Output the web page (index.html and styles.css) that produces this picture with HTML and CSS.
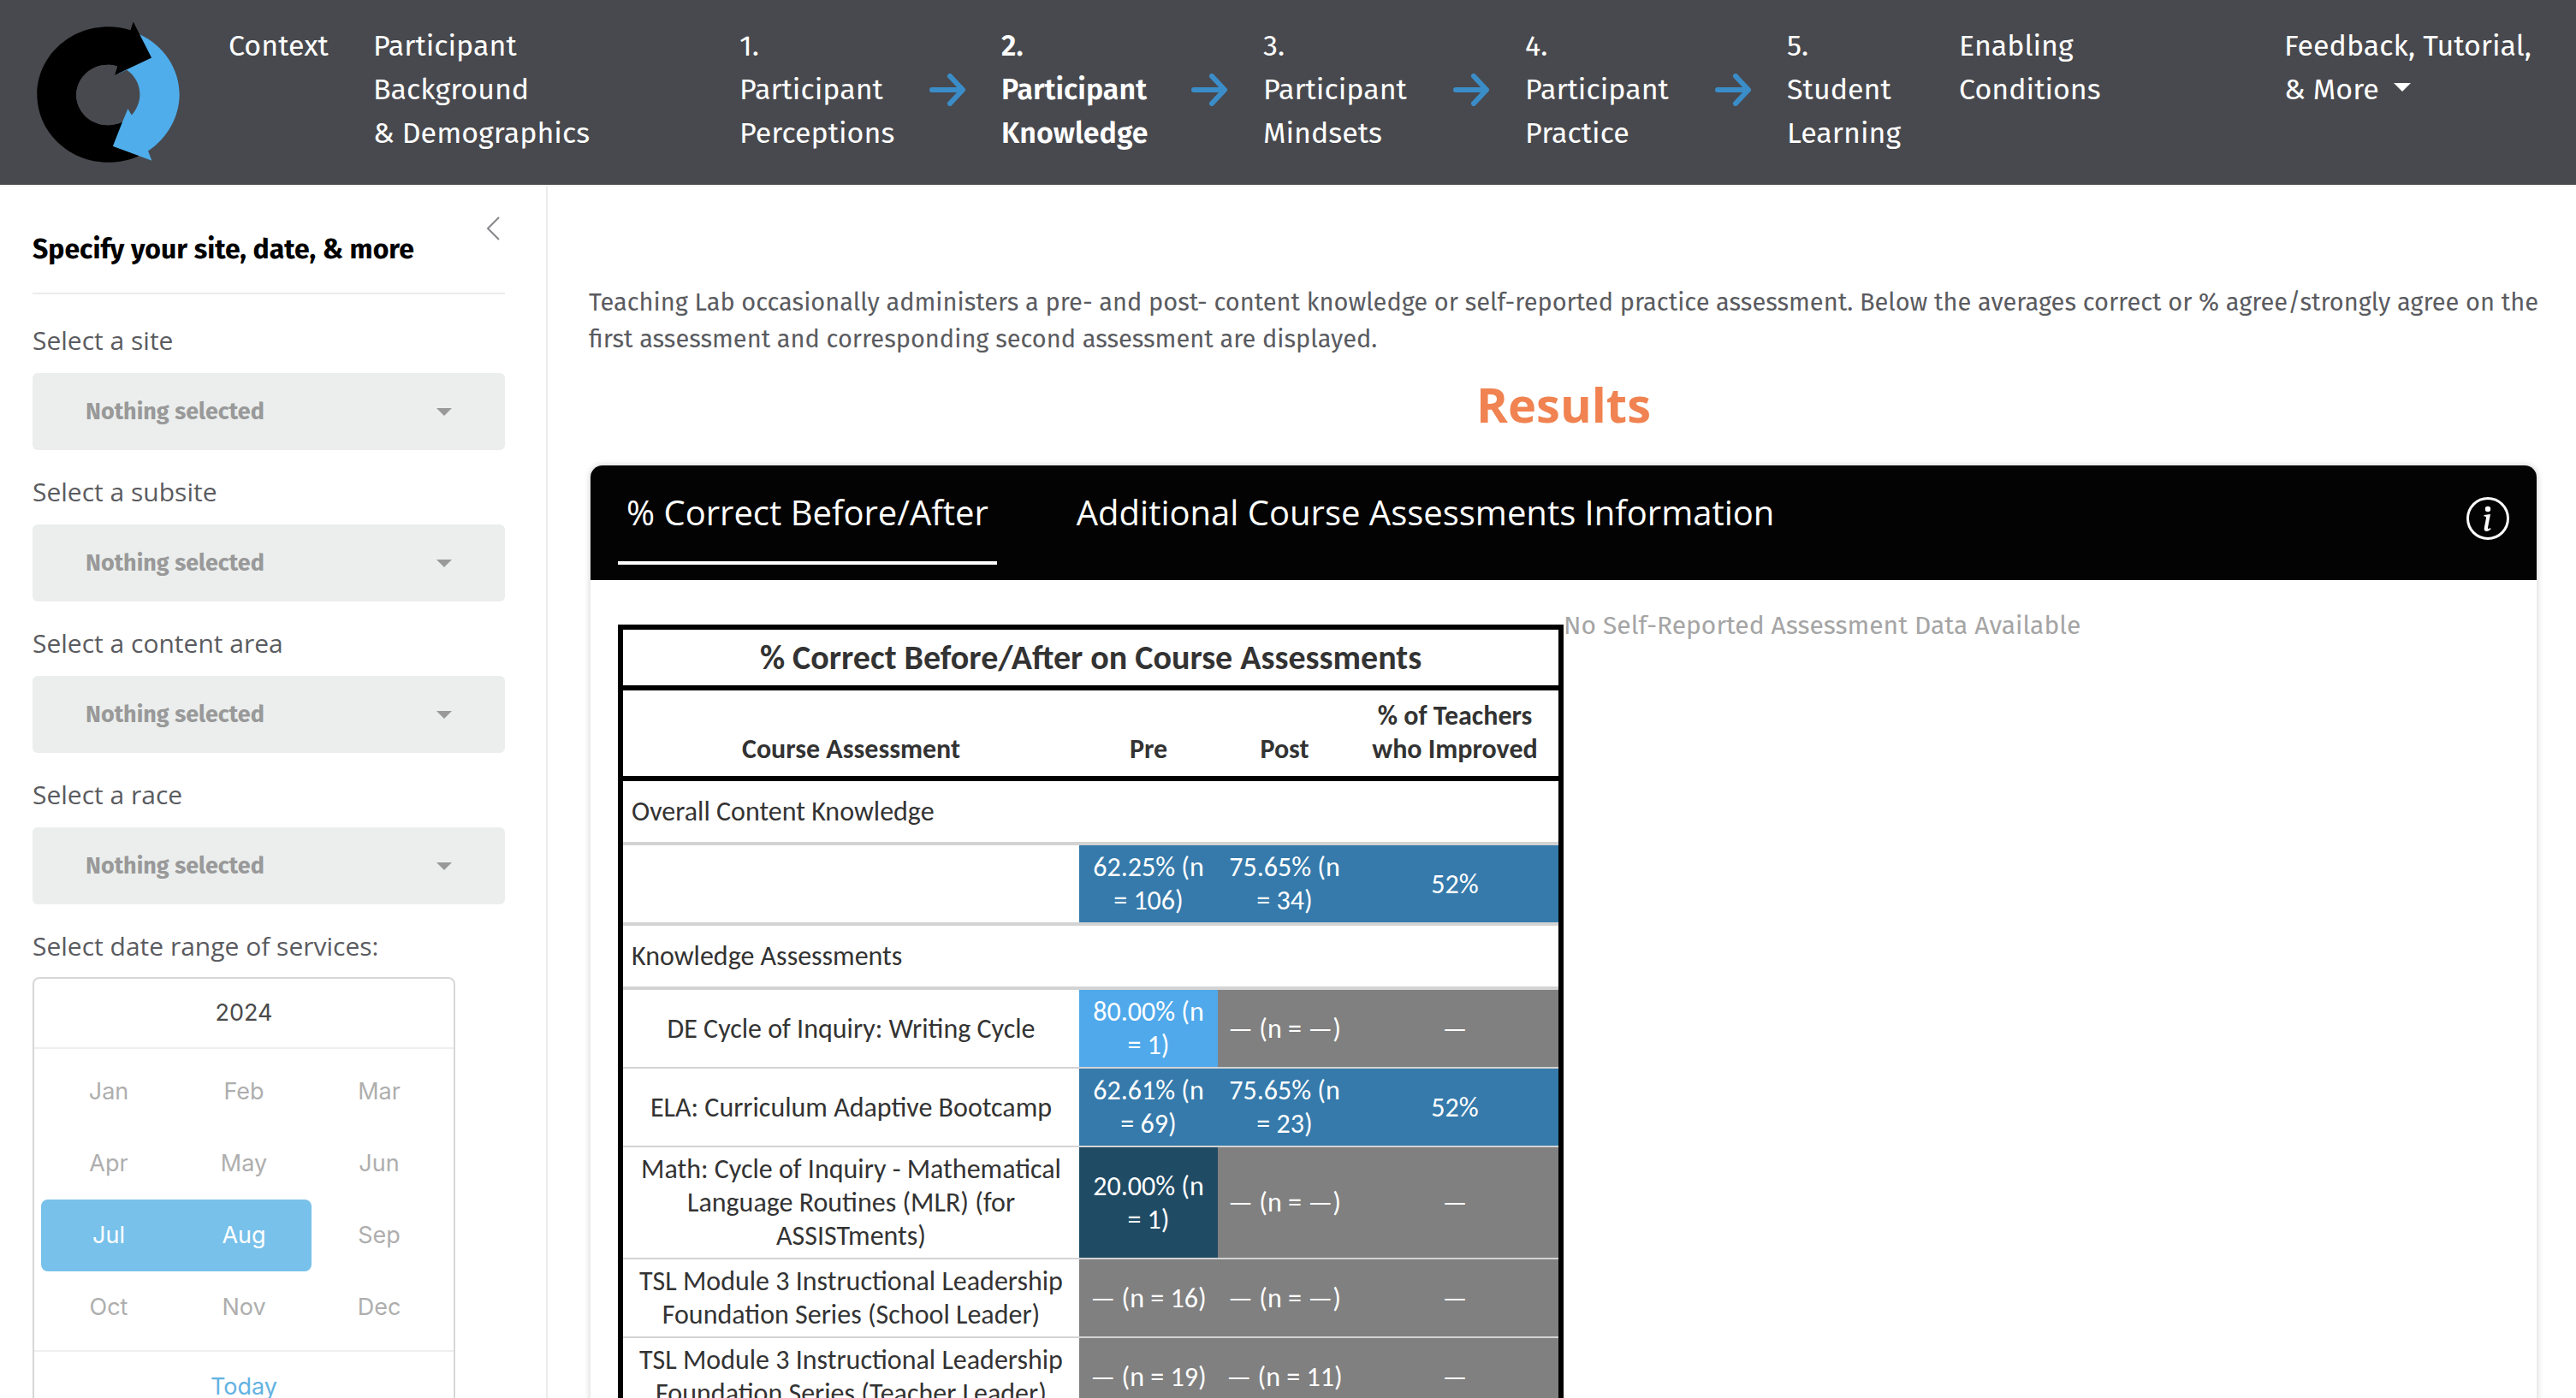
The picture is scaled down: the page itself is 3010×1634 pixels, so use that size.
FILE: index.html
```html
<!DOCTYPE html>
<html lang="en">
<head>
<meta charset="utf-8">
<title>Participant Knowledge</title>
<link rel="stylesheet" href="styles.css">
</head>
<body>
<svg class="sprite" aria-hidden="true">
  <symbol id="arrow" viewBox="0 0 42 38"><path d="M3 19H37M24 3L39 19L24 35" fill="none" stroke="#3b8dc8" stroke-width="6" stroke-linecap="round" stroke-linejoin="round"/></symbol>
  <symbol id="caret" viewBox="0 0 20 10"><path d="M0 0H20L10 10Z" fill="currentColor"/></symbol>
</svg>

<header class="navbar">
  <a class="logo" href="#" aria-label="Home">
    <svg viewBox="66 42 508 504">
      <path fill="#4fadeb" d="M431 90C515 130 570 210 570 301C570 380 528 455 460 500L473 534L336 483L370 300L345 170Z"/>
      <path fill="#000" fill-rule="evenodd" d="M320 540C182 540 70 433 70 301C70 170 182 63 320 63C348 63 374 67 398 75L408 46L472 172L342 234L352 202A111 106 0 1 0 370 397L336 483L428 517C396 531 360 540 320 540Z"/>
      <path fill="#48494e" d="M352 202L342 234L385 215C415 236 431 268 431 301C431 328 420 354 402 374L389 352L370 397A111 106 0 1 1 352 202Z"/>
    </svg>
  </a>
  <nav class="menu">
    <a href="#">Context</a>
    <a href="#">Participant<br>Background<br>&amp; Demographics</a>
    <div class="steps">
      <a class="step" href="#"><span>1.<br>Participant<br>Perceptions</span><svg class="arrow"><use href="#arrow"/></svg></a>
      <a class="step active" href="#"><span>2.<br>Participant<br>Knowledge</span><svg class="arrow"><use href="#arrow"/></svg></a>
      <a class="step" href="#"><span>3.<br>Participant<br>Mindsets</span><svg class="arrow"><use href="#arrow"/></svg></a>
      <a class="step" href="#"><span>4.<br>Participant<br>Practice</span><svg class="arrow"><use href="#arrow"/></svg></a>
      <a href="#">5.<br>Student<br>Learning</a>
    </div>
    <a href="#">Enabling<br>Conditions</a>
    <a class="more" href="#">Feedback, Tutorial,<br>&amp; More <svg class="caret"><use href="#caret"/></svg></a>
  </nav>
</header>

<div class="layout">
  <aside class="sidebar">
    <button class="collapse" type="button" aria-label="Collapse sidebar"><svg viewBox="0 0 16 28"><path d="M15 1L2 14L15 27" fill="none" stroke="#85868a" stroke-width="2"/></svg></button>
    <h2>Specify your site, date, &amp; more</h2>
    <div class="field">
      <label for="site">Select a site</label>
      <div class="picker"><select id="site"><option>Nothing selected</option></select><svg class="caret"><use href="#caret"/></svg></div>
    </div>
    <div class="field">
      <label for="subsite">Select a subsite</label>
      <div class="picker"><select id="subsite"><option>Nothing selected</option></select><svg class="caret"><use href="#caret"/></svg></div>
    </div>
    <div class="field">
      <label for="content">Select a content area</label>
      <div class="picker"><select id="content"><option>Nothing selected</option></select><svg class="caret"><use href="#caret"/></svg></div>
    </div>
    <div class="field">
      <label for="race">Select a race</label>
      <div class="picker"><select id="race"><option>Nothing selected</option></select><svg class="caret"><use href="#caret"/></svg></div>
    </div>
    <div class="field" role="group" aria-labelledby="range">
      <div class="label" id="range">Select date range of services:</div>
      <div class="calendar">
        <button class="year" type="button">2024</button>
        <div class="months">
          <button type="button">Jan</button><button type="button">Feb</button><button type="button">Mar</button>
          <button type="button">Apr</button><button type="button">May</button><button type="button">Jun</button>
          <button type="button" class="from">Jul</button><button type="button" class="to">Aug</button><button type="button">Sep</button>
          <button type="button">Oct</button><button type="button">Nov</button><button type="button">Dec</button>
        </div>
        <button class="today" type="button">Today</button>
      </div>
    </div>
  </aside>

  <main class="content">
    <p class="intro">Teaching Lab occasionally administers a pre- and post- content knowledge or self-reported practice assessment. Below the averages correct or % agree/strongly agree on the first assessment and corresponding second assessment are displayed.</p>
    <h1>Results</h1>
    <section class="card">
      <div class="card-head">
        <div class="tabs" role="tablist">
          <button class="tab selected" type="button" role="tab" aria-selected="true">% Correct Before/After</button>
          <button class="tab" type="button" role="tab" aria-selected="false">Additional Course Assessments Information</button>
        </div>
        <button class="info" type="button" aria-label="Information">
          <svg viewBox="0 0 50 50"><circle cx="25" cy="25" r="23.500" fill="none" stroke="#fff" stroke-width="3"/><circle cx="25" cy="14" r="3.200" fill="#fff"/><path fill="#fff" d="M20.500 21L28 20L25 35.500C24.700 37.500 26 37.500 28 36L28.500 37.500C24 41.500 20 40.500 20.800 36L23 24.500C23.300 22.800 22.500 22.600 20.500 22.500Z"/></svg>
        </button>
      </div>
      <div class="card-body">
        <table class="scores">
          <colgroup><col><col class="c-pre"><col class="c-post"><col class="c-imp"></colgroup>
          <thead>
            <tr><th class="title" colspan="4">% Correct Before/After on Course Assessments</th></tr>
            <tr class="heads"><th>Course Assessment</th><th>Pre</th><th>Post</th><th>% of Teachers who Improved</th></tr>
          </thead>
          <tbody>
            <tr class="group first"><td colspan="4">Overall Content Knowledge</td></tr>
            <tr><td></td><td class="mid">62.25% (n = 106)</td><td class="mid">75.65% (n = 34)</td><td class="mid">52%</td></tr>
            <tr class="group"><td colspan="4">Knowledge Assessments</td></tr>
            <tr><td>DE Cycle of Inquiry: Writing Cycle</td><td class="high">80.00% (n = 1)</td><td class="none">— (n = —)</td><td class="none">—</td></tr>
            <tr class="line"><td>ELA: Curriculum Adaptive Bootcamp</td><td class="mid">62.61% (n = 69)</td><td class="mid">75.65% (n = 23)</td><td class="mid">52%</td></tr>
            <tr class="line"><td>Math: Cycle of Inquiry - Mathematical Language Routines (MLR) (for ASSISTments)</td><td class="low">20.00% (n = 1)</td><td class="none">— (n = —)</td><td class="none">—</td></tr>
            <tr class="line"><td>TSL Module 3 Instructional Leadership Foundation Series (School Leader)</td><td class="none">— (n = 16)</td><td class="none">— (n = —)</td><td class="none">—</td></tr>
            <tr class="line"><td>TSL Module 3 Instructional Leadership Foundation Series (Teacher Leader)</td><td class="none">— (n = 19)</td><td class="none">— (n = 11)</td><td class="none">—</td></tr>
          </tbody>
        </table>
        <p class="empty">No Self-Reported Assessment Data Available</p>
      </div>
    </section>
  </main>
</div>
</body>
</html>
```

FILE: styles.css
```css
* { box-sizing: border-box; }

body {
  margin: 0;
  height: 100vh;
  overflow: hidden;
  display: flex;
  flex-direction: column;
  background: #fff;
  color: #5a5b60;
  font-family: "Fira Sans", "Noto Sans", sans-serif;
}

h1, h2, p { margin: 0; }
a { color: inherit; text-decoration: none; }
button { border: 0; padding: 0; margin: 0; background: none; font: inherit; color: inherit; }
svg { display: block; }
.sprite { display: none; }

/* Top navigation */
.navbar {
  flex: none;
  display: flex;
  align-items: flex-start;
  gap: 56px;
  padding: 24px 52px 24px 42px;
  background: #48494e;
  border-bottom: 2px solid #f4f4f4;
  color: #fff;
}
.logo svg { width: 169px; height: 168px; }
.menu {
  flex: 1;
  display: flex;
  padding-top: 4px;
  gap: 52px;
  font-size: 34px;
  line-height: 51px;
  white-space: nowrap;
}
.steps { display: flex; margin: 0 16px 0 123px; }
.step {
  width: 306px;
  display: flex;
  justify-content: space-between;
  align-items: center;
  padding-right: 42px;
}
.active { font-weight: 600; }
.arrow { width: 42px; height: 38px; }
.more { margin-left: auto; }
.caret { width: 18px; height: 9px; }
.more .caret { display: inline-block; margin-left: 8px; vertical-align: 9px; width: 20px; height: 10px; }

/* Sidebar */
.layout { flex: 1; min-height: 0; display: flex; }
.sidebar {
  position: relative;
  flex: none;
  width: 640px;
  padding: 49px 48px 0 38px;
  border-right: 2px solid #ebebeb;
  overflow: hidden;
}
.collapse { position: absolute; top: 35px; right: 54px; }
.collapse svg { width: 16px; height: 28px; }
.sidebar h2 {
  padding-bottom: 27px;
  border-bottom: 2px solid #ebebeb;
  margin-bottom: 31px;
  font-size: 32px;
  line-height: 48px;
  color: #000;
}
.field { margin-bottom: 26px; }
.field label, .label {
  display: block;
  margin-bottom: 16px;
  font: 30px/45px "Open Sans", sans-serif;
}
.field .label { margin-bottom: 14px; }
.picker { display: grid; align-items: center; }
.picker select, .picker .caret { grid-area: 1 / 1; }
.picker .caret { justify-self: end; margin-right: 62px; color: #999; pointer-events: none; }
.picker select {
  appearance: none;
  width: 100%;
  height: 90px;
  padding: 0 62px;
  border: 0;
  border-radius: 6px;
  background: #ebeeed;
  color: #999;
  font: 700 27px/40px "Fira Sans", "Noto Sans", sans-serif;
}

.calendar {
  width: 494px;
  border: 2px solid #d7d7d7;
  border-radius: 8px;
  font: 27px/36px Inter, sans-serif;
}
.year { display: block; width: 100%; height: 82px; border-bottom: 2px solid #efefef; color: #4a4a4a; }
.months {
  display: grid;
  grid-template-columns: repeat(3, 1fr);
  grid-auto-rows: 84px;
  padding: 8px;
  color: #aeaeae;
}
.months .from, .months .to { background: #78c1ea; color: #fff; }
.months .from { border-radius: 8px 0 0 8px; }
.months .to { border-radius: 0 8px 8px 0; }
.today { display: block; width: 100%; height: 84px; border-top: 2px solid #efefef; color: #62b2e2; }

/* Main area */
.content { flex: 1; min-width: 0; padding: 114px 44px 0 48px; overflow: hidden; }
.intro { font-size: 29px; line-height: 43px; }
h1 {
  margin: 21px 0 37px;
  text-align: center;
  font: 700 56px/66px "Open Sans", sans-serif;
  color: #f08351;
}
.card {
  border: 2px solid #ebebeb;
  border-radius: 16px;
  box-shadow: 0 0 6px rgba(0, 0, 0, 0.12);
}
.card-head {
  display: flex;
  justify-content: space-between;
  align-items: flex-start;
  padding: 25px 32px 18px;
  border-radius: 14px 14px 0 0;
  background: #030303;
  color: #fff;
}
.tabs { display: flex; gap: 83px; }
.tab {
  padding: 0 10px 27px;
  border-bottom: 4px solid transparent;
  font: 40px/60px "Open Sans", sans-serif;
}
.selected { border-bottom-color: #fff; }
.info { margin-top: 12px; }
.info svg { width: 50px; height: 50px; }
.card-body { display: grid; grid-template-columns: 1fr 1fr; align-items: start; padding: 32px; }
.empty { font-size: 30px; line-height: 43px; color: #a5a5a5; }

.scores {
  width: 100%;
  margin-top: 20px;
  table-layout: fixed;
  border: 6px solid #000;
  border-collapse: separate;
  border-spacing: 0;
  color: #333;
  font: 32px/39px Carlito, Lato, sans-serif;
}
.c-pre { width: 162px; }
.c-post { width: 156px; }
.c-imp { width: 242px; }
.scores th, .scores td { padding: 6px 10px; text-align: center; }
.scores .title { padding: 8px 10px; border-bottom: 6px solid #000; font-size: 40px; line-height: 49px; }
.scores .heads th { padding: 10px 10px 12px; border-bottom: 6px solid #000; vertical-align: bottom; }
.scores .group td { padding: 16px 10px; text-align: left; border: solid #d3d3d3; border-width: 4px 0; }
.scores .first td { border-top: 0; }
.scores .line td { border-top: 2px solid #d3d3d3; }
.scores .mid { background: #357aab; color: #fff; }
.scores .high { background: #4fa9ea; color: #fff; }
.scores .low { background: #204b65; color: #fff; }
.scores .none { background: #808080; color: #fff; }
```
